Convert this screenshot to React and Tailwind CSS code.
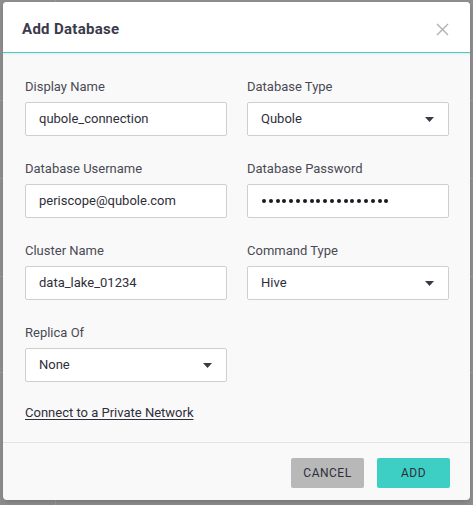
import React from 'react';

const font = { fontFamily: 'Roboto, "Liberation Sans", sans-serif' };

function Label({ children }) {
  return <div className="h-4 text-[13px] leading-4 text-[#4a4a55] mb-[7px]">{children}</div>;
}

function TextBox({ value }) {
  return (
    <div className="h-[34px] bg-white border border-[#cfcfcf] rounded-[2px] px-[13px] flex items-center text-[13px] text-[#2f2f3a]">
      {value}
    </div>
  );
}

function SelectBox({ value }) {
  return (
    <div className="h-[34px] bg-white border border-[#cfcfcf] rounded-[2px] pl-[13px] pr-[14px] flex items-center justify-between text-[13px] text-[#2f2f3a]">
      <span>{value}</span>
      <svg width="9" height="5" viewBox="0 0 9 5"><path d="M0 0h9L4.5 5z" fill="#3a3a45" /></svg>
    </div>
  );
}

function Field({ label, children }) {
  return (
    <div>
      <Label>{label}</Label>
      {children}
    </div>
  );
}

export default function App() {
  const dots = Array.from({ length: 19 });
  return (
    <div className="w-[473px] h-[505px] bg-[#8d8d8d] relative overflow-hidden" style={font}>
      {/* faint backdrop lines */}
      <div className="absolute left-0 top-[100px] w-full h-px bg-[#9a9a9a]" />
      <div className="absolute left-0 top-[178px] w-full h-px bg-[#9a9a9a]" />
      <div className="absolute left-0 top-[276px] w-full h-px bg-[#9a9a9a]" />
      <div className="absolute left-0 top-[372px] w-full h-px bg-[#9a9a9a]" />
      <div className="absolute left-[55px] top-0 w-px h-full bg-[#999]" />

      <div className="absolute left-[3px] top-[2px] w-[467px] h-[498px] rounded-[4px] overflow-hidden bg-[#f9f9f9] flex flex-col shadow-md">
        <div className="h-[51px] bg-white border-b border-[#3fcfc4] flex items-center justify-between pl-[19px] pr-[21px] pt-[5px] shrink-0 shadow-[0_1px_2px_rgba(0,0,0,0.08)]">
          <span className="text-[15px] font-bold text-[#3a3a4c] tracking-[0.3px]">Add Database</span>
          <svg width="13" height="13" viewBox="0 0 13 13">
            <path d="M1 1l11 11M12 1L1 12" stroke="#b0b0b0" strokeWidth="1.4" />
          </svg>
        </div>

        <div className="px-[22px] pt-[26px] pb-[18px] border-b border-[#e3e3e3]">
          <div className="grid grid-cols-[202px_202px] gap-x-5 gap-y-[25px]">
            <Field label="Display Name"><TextBox value="qubole_connection" /></Field>
            <Field label="Database Type"><SelectBox value="Qubole" /></Field>
            <Field label="Database Username"><TextBox value="periscope@qubole.com" /></Field>
            <Field label="Database Password">
              <div className="h-[34px] bg-white border border-[#cfcfcf] rounded-[2px] px-[14px] flex items-center gap-[2.8px]">
                {dots.map((_, i) => (
                  <span key={i} className="w-[4px] h-[4px] rounded-full bg-[#1a1a22]" />
                ))}
              </div>
            </Field>
            <Field label="Cluster Name"><TextBox value="data_lake_01234" /></Field>
            <Field label="Command Type"><SelectBox value="Hive" /></Field>
            <Field label="Replica Of"><SelectBox value="None" /></Field>
          </div>
          <a className="inline-block mt-[23px] text-[13px] leading-4 text-[#2f2f3a] underline underline-offset-2">
            Connect to a Private Network
          </a>
        </div>

        <div className="flex justify-end gap-[13px] pt-[15px] pr-[20px]">
          <button className="w-[73px] h-[30px] rounded-[2px] bg-[#b8b8b8] text-[12px] tracking-[0.5px] text-[#2f2f3a]">CANCEL</button>
          <button className="w-[73px] h-[30px] rounded-[2px] bg-[#3ecfc4] text-[12px] tracking-[0.5px] text-[#2f2f3a]">ADD</button>
        </div>
      </div>
    </div>
  );
}
